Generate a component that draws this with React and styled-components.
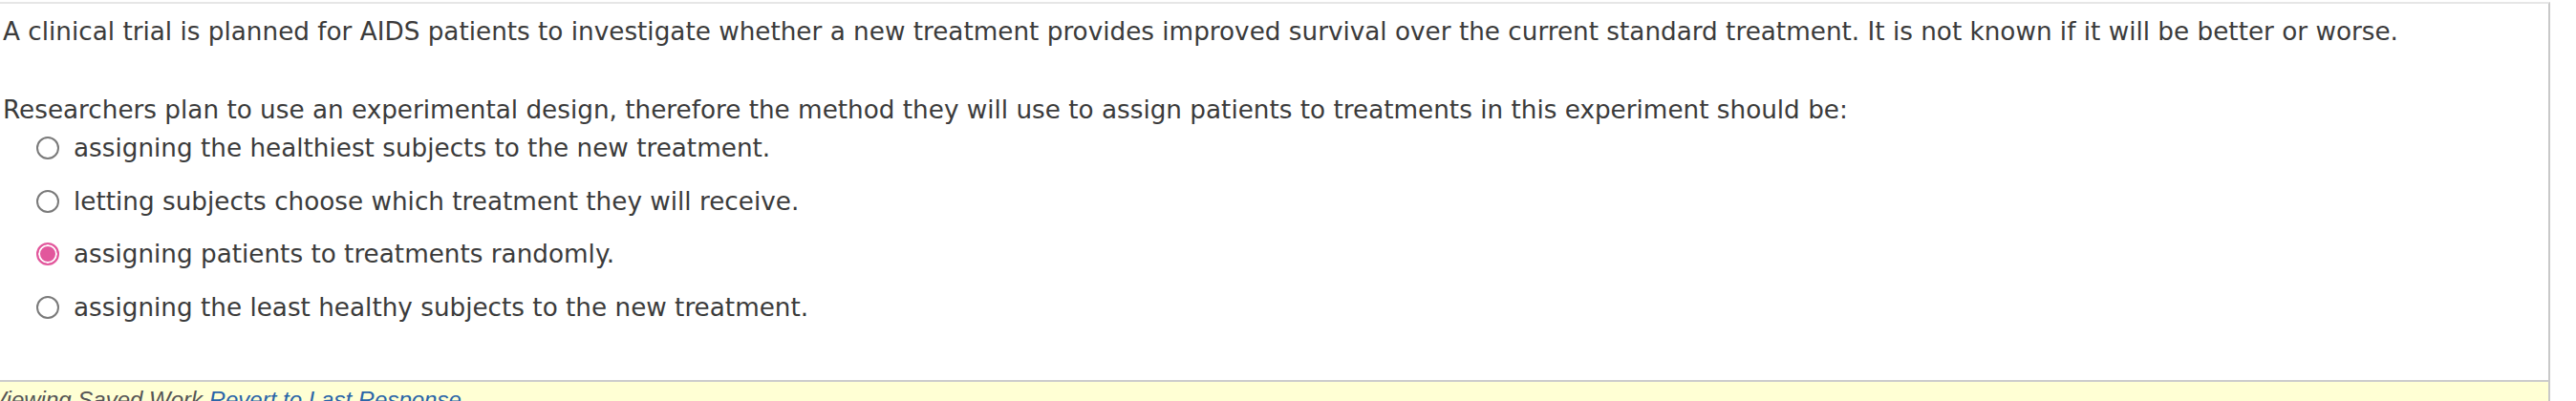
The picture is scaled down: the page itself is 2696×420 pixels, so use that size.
import React from 'react';
import styled, { createGlobalStyle } from 'styled-components';

const GlobalStyle = createGlobalStyle`
  html, body {
    margin: 0;
    padding: 0;
    background: #ffffff;
  }
`;

const options = [
  { id: 'a', label: 'assigning the healthiest subjects to the new treatment.' },
  { id: 'b', label: 'letting subjects choose which treatment they will receive.' },
  { id: 'c', label: 'assigning patients to treatments randomly.', checked: true },
  { id: 'd', label: 'assigning the least healthy subjects to the new treatment.' },
];

const App = function () {
  return (
    <Page>
      <GlobalStyle />
      <Panel>
        <Body>
          <Paragraph>
            A clinical trial is planned for AIDS patients to investigate whether a new
            treatment provides improved survival over the current standard treatment. It is
            not known if it will be better or worse.
          </Paragraph>
          <Prompt>
            Researchers plan to use an experimental design, therefore the method they will use
            to assign patients to treatments in this experiment should be:
          </Prompt>
          <OptionList>
            {options.map((opt) => (
              <Option key={opt.id}>
                <RadioMark $checked={opt.checked} />
                <span>{opt.label}</span>
              </Option>
            ))}
          </OptionList>
        </Body>
        <Footer>
          <FooterText>
            Viewing Saved Work <RevertLink href="#">Revert to Last Response</RevertLink>
          </FooterText>
        </Footer>
      </Panel>
    </Page>
  );
};

export default App;

const Page = styled.div`
  width: 2696px;
  height: 420px;
  overflow: hidden;
  padding-top: 2px;
  box-sizing: border-box;
`;

const Panel = styled.div`
  width: 2669px;
  box-sizing: border-box;
  border-top: 2px solid #e6e6e6;
  border-right: 2px solid #c9c9c9;
`;

const Body = styled.div`
  padding: 11px 0 58px 3px;
  font-family: 'DejaVu Sans', Verdana, sans-serif;
  font-size: 26.25px;
  line-height: 36px;
  color: #3b3b3b;
`;

const Paragraph = styled.p`
  margin: 0 0 46px;
  white-space: nowrap;
`;

const Prompt = styled.p`
  margin: 0 0 4px;
  white-space: nowrap;
`;

const OptionList = styled.div`
  display: flex;
  flex-direction: column;
  gap: 19.5px;
`;

const Option = styled.label`
  display: flex;
  align-items: center;
  gap: 15px;
  padding-left: 35px;
  cursor: pointer;
`;

const RadioMark = styled.span`
  flex: none;
  width: 24px;
  height: 24px;
  box-sizing: border-box;
  border-radius: 50%;
  border: 2px solid ${(p) => (p.$checked ? '#e2579c' : '#7a7a7a')};
  background: ${(p) => (p.$checked ? '#e2579c' : '#ffffff')};
  box-shadow: ${(p) => (p.$checked ? 'inset 0 0 0 2px #ffffff' : 'none')};
`;

const Footer = styled.div`
  height: 40px;
  border-top: 2px solid #cccccc;
  background: #ffffd4;
  overflow: hidden;
`;

const FooterText = styled.div`
  margin-left: -9px;
  padding-top: 5px;
  font-family: 'Liberation Sans', Arial, sans-serif;
  font-style: italic;
  font-size: 24px;
  color: #555555;
  white-space: nowrap;
`;

const RevertLink = styled.a`
  color: #2a65a8;
  text-decoration: none;
`;
